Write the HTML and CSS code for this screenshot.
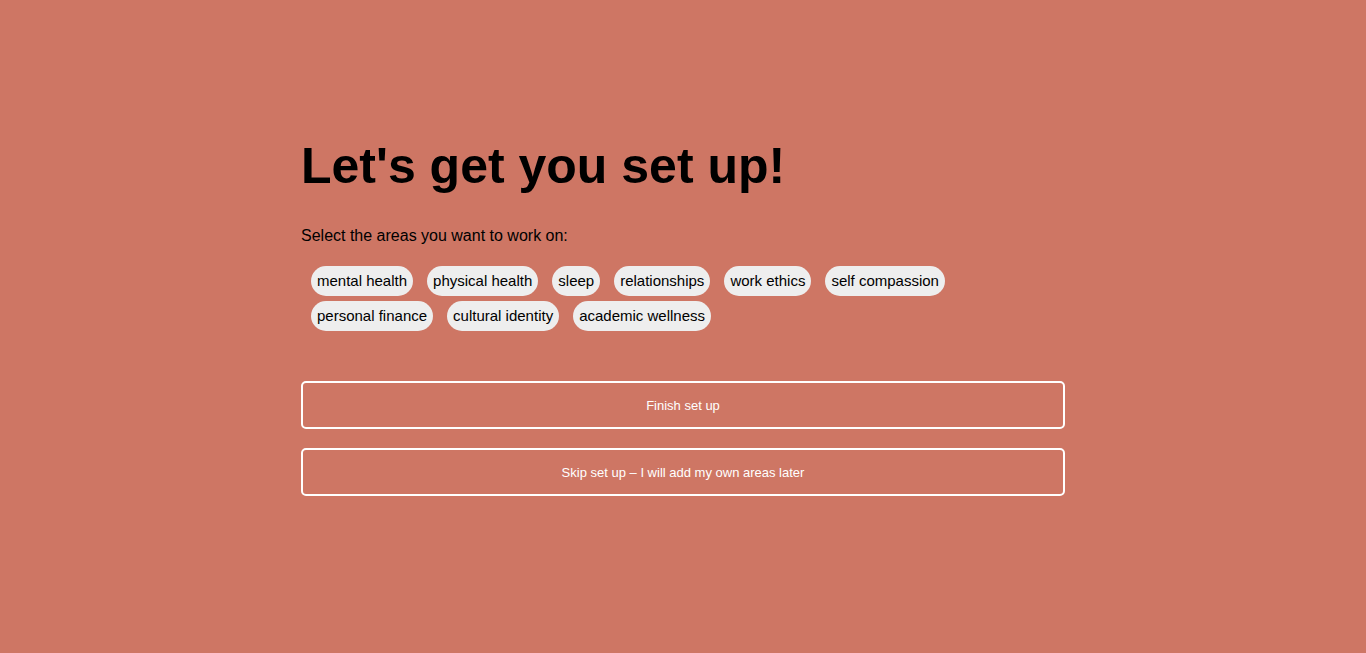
FILE: index.html
```html
<!DOCTYPE html>
<html lang="en">
<head>
<meta charset="utf-8">
<title>Set up</title>
<link rel="stylesheet" href="styles.css">
</head>
<body>
<main class="setup">
  <h1 class="title">Let's get you set up!</h1>
  <p class="lead">Select the areas you want to work on:</p>
  <ul class="chips">
    <li class="chip">mental health</li>
    <li class="chip">physical health</li>
    <li class="chip">sleep</li>
    <li class="chip">relationships</li>
    <li class="chip">work ethics</li>
    <li class="chip">self compassion</li>
    <li class="chip">personal finance</li>
    <li class="chip">cultural identity</li>
    <li class="chip">academic wellness</li>
  </ul>
  <div class="actions">
    <button class="btn">Finish set up</button>
    <button class="btn">Skip set up – I will add my own areas later</button>
  </div>
</main>
</body>
</html>
```
FILE: styles.css
```css
html, body {
  margin: 0;
  padding: 0;
  background: #ce7664;
  height: 100%;
}
body {
  font-family: "Liberation Sans", Arial, Helvetica, sans-serif;
  color: #000;
}
.setup {
  width: 764px;
  margin: 0 auto;
  padding-top: 134px;
  box-sizing: border-box;
}
.title {
  margin: 0;
  font-size: 50px;
  line-height: 64px;
  font-weight: 700;
}
.lead {
  margin: 28px 0 0;
  font-size: 16px;
  line-height: 20px;
}
.chips {
  list-style: none;
  margin: 20px 0 0;
  padding: 0 0 0 10px;
  display: flex;
  flex-wrap: wrap;
  column-gap: 14px;
  row-gap: 5px;
}
.chip {
  background: #eeeeee;
  border-radius: 15px;
  height: 30px;
  padding: 0 6px;
  font-size: 15px;
  line-height: 30px;
  box-sizing: border-box;
}
.actions {
  margin-top: 50px;
  display: flex;
  flex-direction: column;
  gap: 19px;
}
.btn {
  display: block;
  width: 100%;
  height: 48px;
  background: transparent;
  border: 2px solid #ffffff;
  border-radius: 5px;
  color: #ffffff;
  font-family: "Liberation Sans", Arial, Helvetica, sans-serif;
  font-size: 13px;
  padding: 0;
  cursor: pointer;
}
```
